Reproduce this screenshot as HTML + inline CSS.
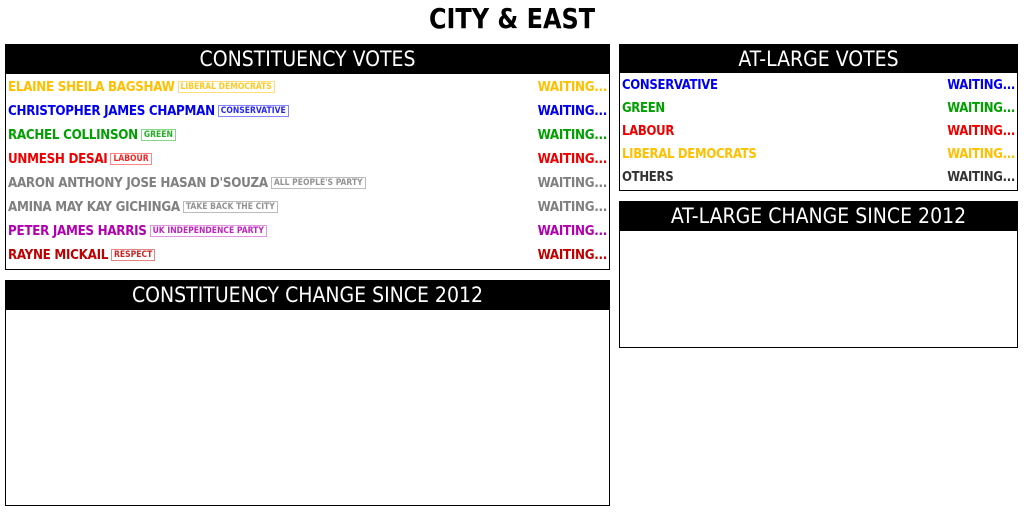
<!DOCTYPE html>
<html><head><meta charset="utf-8"><style>
*{margin:0;padding:0;box-sizing:border-box}
body{width:1024px;height:512px;background:#fff;font-family:"DejaVu Sans Condensed","Liberation Sans",sans-serif;position:relative;overflow:hidden}
h1{position:absolute;top:2px;left:0;width:1024px;text-align:center;font-size:28px;font-weight:bold;transform:scaleX(0.95)}
.box{position:absolute;border:1px solid #000}
.hd{background:#000;color:#fff;text-align:center;font-weight:normal;font-size:21px;line-height:29px;height:29px}
.row{position:relative;height:24px;font-weight:bold;font-size:13.3px;line-height:24px;padding-left:2px;white-space:nowrap;letter-spacing:-0.3px}
.row .w{position:absolute;right:2px;top:0}
.tag{display:inline-block;font-size:8.5px;line-height:10px;padding:0 2px;border:1px solid;opacity:.85;vertical-align:2px;margin-left:3px;letter-spacing:0}
.r2 .row{height:23px;line-height:23px;font-size:13px}
</style></head><body>
<h1>CITY &amp; EAST</h1>
<div class="box" style="left:5px;top:44px;width:605px;height:226px">
<div class="hd">CONSTITUENCY VOTES</div>
<div style="padding-top:2px">
<div class="row" style="color:#ffc000">ELAINE SHEILA BAGSHAW<span class="tag" style="border-color:#ffd860">LIBERAL DEMOCRATS</span><span class="w">WAITING...</span></div>
<div class="row" style="color:#0000ee">CHRISTOPHER JAMES CHAPMAN<span class="tag" style="border-color:#7070ff">CONSERVATIVE</span><span class="w">WAITING...</span></div>
<div class="row" style="color:#00a000">RACHEL COLLINSON<span class="tag" style="border-color:#70d070">GREEN</span><span class="w">WAITING...</span></div>
<div class="row" style="color:#ee0000">UNMESH DESAI<span class="tag" style="border-color:#ff7070">LABOUR</span><span class="w">WAITING...</span></div>
<div class="row" style="color:#808080">AARON ANTHONY JOSE HASAN D'SOUZA<span class="tag" style="border-color:#b0b0b0">ALL PEOPLE'S PARTY</span><span class="w">WAITING...</span></div>
<div class="row" style="color:#808080">AMINA MAY KAY GICHINGA<span class="tag" style="border-color:#b0b0b0">TAKE BACK THE CITY</span><span class="w">WAITING...</span></div>
<div class="row" style="color:#b000b0">PETER JAMES HARRIS<span class="tag" style="border-color:#e080e0">UK INDEPENDENCE PARTY</span><span class="w">WAITING...</span></div>
<div class="row" style="color:#c00000">RAYNE MICKAIL<span class="tag" style="border-color:#e07070">RESPECT</span><span class="w">WAITING...</span></div>
</div></div>
<div class="box" style="left:5px;top:280px;width:605px;height:226px"><div class="hd">CONSTITUENCY CHANGE SINCE 2012</div></div>
<div class="box r2" style="left:619px;top:44px;width:399px;height:147px">
<div class="hd" style="height:28px;line-height:28px">AT-LARGE VOTES</div>
<div style="padding-top:1px">
<div class="row" style="color:#0000ee">CONSERVATIVE<span class="w">WAITING...</span></div>
<div class="row" style="color:#00a000">GREEN<span class="w">WAITING...</span></div>
<div class="row" style="color:#ee0000">LABOUR<span class="w">WAITING...</span></div>
<div class="row" style="color:#ffc000">LIBERAL DEMOCRATS<span class="w">WAITING...</span></div>
<div class="row" style="color:#333">OTHERS<span class="w">WAITING...</span></div>
</div></div>
<div class="box" style="left:619px;top:201px;width:399px;height:147px"><div class="hd">AT-LARGE CHANGE SINCE 2012</div></div>
</body></html>
